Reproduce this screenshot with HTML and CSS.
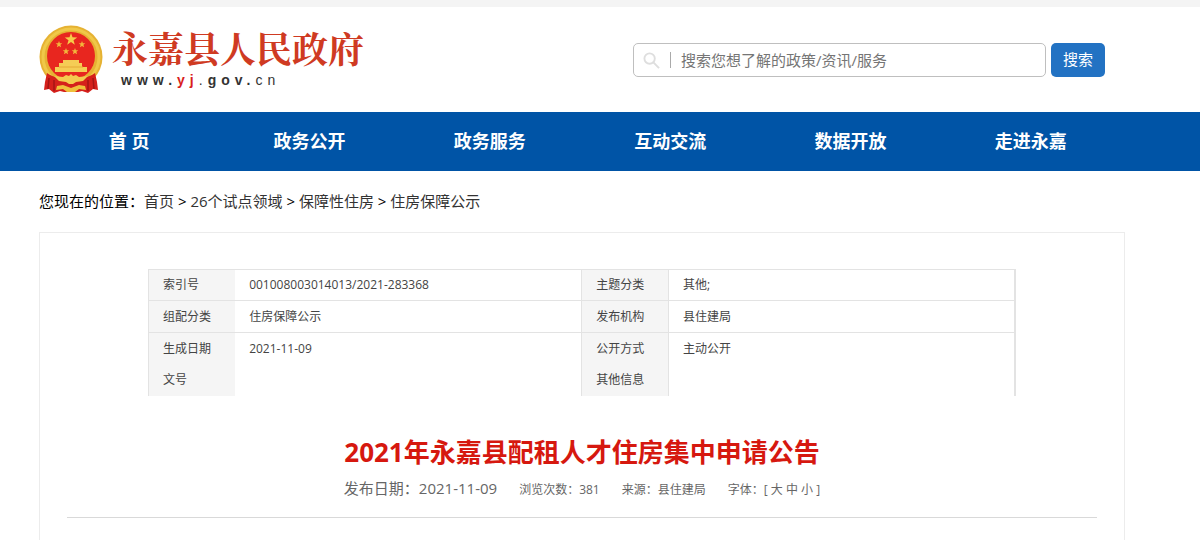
FILE: index.html
```html
<!DOCTYPE html>
<html lang="zh-CN">
<head>
<meta charset="utf-8">
<title>2021年永嘉县配租人才住房集中申请公告</title>
<link rel="stylesheet" href="styles.css">
</head>
<body>
<header class="header">
  <a class="brand" href="#">
    <svg class="emblem" viewBox="0 0 64 70" aria-hidden="true">
      <circle cx="32" cy="32" r="31.500" fill="#e6b233"/>
      <circle cx="32" cy="32" r="28" fill="none" stroke="#f0c848" stroke-width="3"/>
      <circle cx="32" cy="31" r="24" fill="#e8261f"/>
      <path d="M8 48q6 5 14 4h20q8 1 14-4l2 9 1 8-5-1-5 4-6-2-4 1H25l-4-1-6 2-5-4-5 1 1-8z" fill="#d5201b"/>
      <path d="M10 53l-1 11M15 55v11M54 53l1 11M49 55v11" stroke="#a51515" stroke-width="1.500" fill="none"/>
      <path d="M32 8l1.500 4.300 4.700.1-3.700 2.800 1.300 4.500-3.800-2.600-3.800 2.600 1.300-4.500-3.700-2.800 4.700-.1z" fill="#f6cc4a"/>
      <g fill="#f2b73c">
        <path d="M20 16l.9 2.200 2.400.1-1.900 1.500.7 2.400-2.100-1.300-2.100 1.300.7-2.400-1.900-1.500 2.400-.1z"/>
        <path d="M43 16l.9 2.200 2.400.1-1.900 1.500.7 2.400-2.100-1.300-2.100 1.300.7-2.400-1.900-1.500 2.400-.1z"/>
        <path d="M27 23l.9 2.200 2.400.1-1.900 1.500.7 2.400-2.100-1.300-2.100 1.300.7-2.400-1.900-1.500 2.400-.1z"/>
        <path d="M36 23l.9 2.200 2.400.1-1.900 1.500.7 2.400-2.100-1.300-2.100 1.300.7-2.400-1.900-1.500 2.400-.1z"/>
      </g>
      <path d="M24 35h16v3h3v4h5v5H16v-5h4v-4h4z" fill="#f5cd55"/>
      <path d="M20 42h24" stroke="#e6a936" stroke-width="1"/>
      <path d="M15 51l9 1 3-2 3 1 2-2 2 2 3-1 3 2 9-1-5 5-7 1-3 2h-4l-3-2-7-1z" fill="#f4cb4f"/>
      <path d="M18 61l6-1 8 3 8-3 6 1 1 4-7-1-4 3h-8l-4-3-7 1z" fill="#efc03c"/>
    </svg>
    <span class="brand-text">
      <span class="brand-name">永嘉县人民政府</span>
      <span class="brand-url"><b>www.</b><b class="brand-url-accent">yj</b>.<b>gov.</b>cn</span>
    </span>
  </a>
  <form class="search">
    <label class="search-box">
      <svg class="search-icon" viewBox="0 0 18 18" aria-hidden="true"><circle cx="7" cy="7" r="5.500"/><path d="M11 11l6 6"/></svg>
      <span class="search-divider"></span>
      <input class="search-input" type="text" aria-label="搜索" placeholder="搜索您想了解的政策/资讯/服务">
    </label>
    <button class="search-button" type="button">搜索</button>
  </form>
</header>
<nav class="nav">
  <a href="#">首 页</a>
  <a href="#">政务公开</a>
  <a href="#">政务服务</a>
  <a href="#">互动交流</a>
  <a href="#">数据开放</a>
  <a href="#">走进永嘉</a>
</nav>
<main class="main">
  <div class="crumbs">您现在的位置：<a href="#">首页</a> &gt; <a href="#">26个试点领域</a> &gt; <a href="#">保障性住房</a> &gt; <a href="#">住房保障公示</a></div>
  <article class="card">
    <table class="info">
      <tr class="first"><th scope="row">索引号</th><td>001008003014013/2021-283368</td><th scope="row">主题分类</th><td>其他;</td></tr>
      <tr><th scope="row">组配分类</th><td>住房保障公示</td><th scope="row">发布机构</th><td>县住建局</td></tr>
      <tr><th scope="row">生成日期</th><td>2021-11-09</td><th scope="row">公开方式</th><td>主动公开</td></tr>
      <tr class="plain"><th scope="row">文号</th><td></td><th scope="row">其他信息</th><td></td></tr>
    </table>
    <h1 class="title">2021年永嘉县配租人才住房集中申请公告</h1>
    <div class="meta">
      <span class="meta-date">发布日期：2021-11-09</span>
      <span>浏览次数：381</span>
      <span>来源：县住建局</span>
      <span>字体：[ <button type="button">大</button> <button type="button">中</button> <button type="button">小</button> ]</span>
    </div>
  </article>
</main>
</body>
</html>
```
FILE: styles.css
```css
* { box-sizing: border-box; }
body {
  margin: 0;
  background: #fff;
  color: #000;
  font: 15px/24px "Open Sans", "Noto Sans CJK SC", sans-serif;
}
a { color: inherit; text-decoration: none; }
button, input { font: inherit; color: inherit; }

.header {
  display: flex;
  justify-content: space-between;
  align-items: flex-start;
  height: 112px;
  padding: 18px 95px 0 39px;
  border-top: 7px solid #f4f4f4;
}
.brand { display: flex; gap: 9px; }
.emblem { width: 64px; height: 70px; }
.brand-text { display: flex; flex-direction: column; }
.brand-name {
  color: #cf3a22;
  font: 700 36px/46px "Noto Serif CJK SC", "Noto Sans CJK SC", serif;
}
.brand-url {
  padding-left: 9px;
  color: #333;
  font: 14px/18px "Liberation Sans", sans-serif;
  letter-spacing: 5px;
}
.brand-url-accent { color: #d8201c; }

.search { display: flex; gap: 5px; margin-top: 18px; }
.search-box {
  display: flex;
  align-items: center;
  width: 413px;
  height: 34px;
  padding: 0 9px;
  border: 1px solid #bfbfbf;
  border-radius: 5px;
}
.search-icon {
  width: 17px;
  height: 17px;
  fill: none;
  stroke: #dedede;
  stroke-width: 2;
}
.search-divider { width: 1px; height: 16px; margin: 0 10px; background: #aaa; }
.search-input {
  flex: 1;
  min-width: 0;
  padding: 0;
  border: 0;
  outline: 0;
  background: none;
}
.search-input::placeholder { color: #757575; opacity: 1; }
.search-button {
  width: 54px;
  height: 34px;
  padding: 0 0 2px;
  border: 0;
  border-radius: 5px;
  background: #2272c3;
  color: #fff;
}

.nav {
  display: grid;
  grid-template-columns: repeat(6, 1fr);
  padding: 0 79px 0 39px;
  background: #0054a6;
  color: #fff;
  font-size: 18px;
  font-weight: 700;
  line-height: 59px;
  text-align: center;
}

.main { padding: 18px 75px 0 39px; }
.crumbs a { color: #333; }
.card {
  margin-top: 19px;
  padding: 36px 27px 40px;
  border: 1px solid #ececec;
  border-bottom: 0;
}

.info {
  width: calc(100% - 162px);
  margin: 0 auto;
  border-collapse: collapse;
  table-layout: fixed;
  border-right: 2px solid #e3e3e3;
  color: #444;
  font-size: 12px;
  line-height: 20px;
  text-align: left;
}
.info th, .info td {
  height: 32px;
  padding: 0 14px;
  border-top: 1px solid #e3e3e3;
  font-weight: 400;
}
.info th { width: 10%; background: #f5f5f5; border-left: 1px solid #e3e3e3; }
.info td { width: 40%; }
.info td:last-child { border-left: 1px solid #e3e3e3; }
.info .first th, .info .first td { height: 31px; }
.info .plain th, .info .plain td { height: 31px; border-top: 0; }

.title {
  margin: 36px 0 0;
  color: #d6180f;
  font-size: 26px;
  line-height: 40px;
  text-align: center;
}
.meta {
  display: flex;
  justify-content: center;
  align-items: baseline;
  gap: 22px;
  padding: 4px 0 15px;
  border-bottom: 1px solid #d9d9d9;
  color: #666;
  font-size: 12px;
}
.meta-date { font-size: 15px; }
.meta button { padding: 0; border: 0; background: none; }
```
